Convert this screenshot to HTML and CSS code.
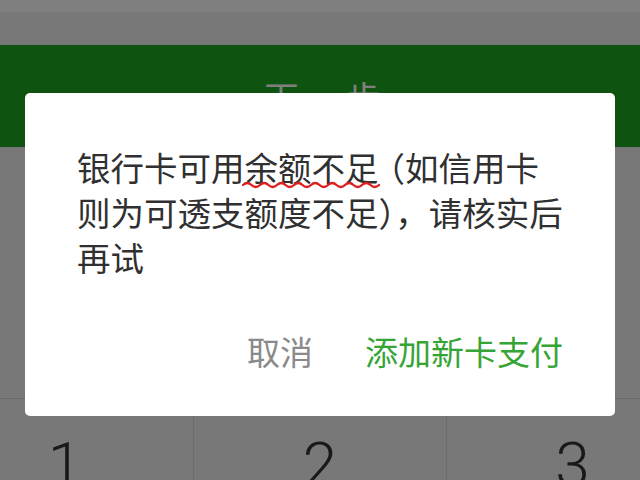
FILE: index.html
```html
<!DOCTYPE html>
<html lang="zh-CN">
<head>
  <meta charset="UTF-8" />
  <meta name="viewport" content="width=device-width, initial-scale=1.0"/>
  <title>支付</title>
  <link rel="stylesheet" href="styles.css">
</head>
<body>

  <div class="status"></div>
  <div class="top-gap"></div>
  <div class="next-btn">下一步</div>
  <div class="mid-gap"></div>

  <div class="keypad">
    <div class="key key-left">1</div>
    <div class="key">2</div>
    <div class="key key-right">3</div>
  </div>

  <!-- 弹窗 -->
  <div class="mask">
    <div class="dialog">
      <p class="msg">银行卡可用<span class="typo">余额不<span class="tight">足</span><svg class="squiggle" width="140" height="10" viewBox="0 0 140 10"><path d="M1 5 Q5.25 1 9.5 5 T18 5 T26.5 5 T35 5 T43.5 5 T52 5 T60.5 5 T69 5 T77.5 5 T86 5 T94.5 5 T103 5 T111.5 5 T120 5 T128.5 5 T137 5" fill="none" stroke="#dc1f1f" stroke-width="2.4" stroke-linecap="round"/></svg></span>（如信用卡<br>则为可透支额度不足），请核实后<br>再试</p>
      <div class="actions">
        <span class="btn btn-cancel">取消</span>
        <span class="btn btn-ok">添加新卡支付</span>
      </div>
    </div>
  </div>

</body>
</html>
```

FILE: styles.css
```css
body {
  margin: 0;
  padding: 0;
  background: #f0f0f0;
  font-family: "Noto Sans CJK SC", "Noto Sans", sans-serif;
  overflow: hidden;
}

.status {
  height: 12px;
  background: #fefefe;
}

.top-gap {
  height: 33px;
}

.next-btn {
  height: 102px;
  background: #1ea620;
  color: #fff;
  font-size: 34px;
  letter-spacing: 7px;
  display: flex;
  align-items: center;
  justify-content: center;
  padding-left: 12px;
}

.mid-gap {
  height: 251px;
}

.keypad {
  display: grid;
  grid-template-columns: 193px 253px 1fr;
  border-top: 1px solid #d6d6d6;
  height: 90px;
}

.key {
  font-family: Roboto, "Liberation Sans", sans-serif;
  font-weight: 300;
  font-size: 62px;
  line-height: 1;
  color: #333;
  text-align: center;
  padding-top: 35px;
  border-left: 1px solid #d6d6d6;
}

.key-left {
  border-left: none;
  padding-right: 63px;
}

.key-right {
  padding-left: 58px;
}

.mask {
  position: fixed;
  top: 0;
  left: 0;
  right: 0;
  bottom: 0;
  background: rgba(0, 0, 0, 0.5);
}

.dialog {
  width: 590px;
  height: 323px;
  margin: 93px 25px 0;
  box-sizing: border-box;
  padding: 51px 30px 0 52px;
  background: #fff;
  border-radius: 5px;
}

.msg {
  margin: 0;
  font-size: 33.5px;
  line-height: 45px;
  color: #303030;
  white-space: nowrap;
}

/* 拼写检查的红色波浪线 */
.typo {
  position: relative;
}

.squiggle {
  position: absolute;
  left: -3px;
  top: 38px;
}

.tight {
  letter-spacing: -7px;
}

.actions {
  display: flex;
  justify-content: flex-end;
  gap: 52px;
  margin-top: 50px;
  padding-right: 22px;
}

.btn {
  font-size: 33px;
  line-height: 45px;
}

.btn-cancel {
  color: #8a8a8a;
}

.btn-ok {
  color: #35a535;
}
```
